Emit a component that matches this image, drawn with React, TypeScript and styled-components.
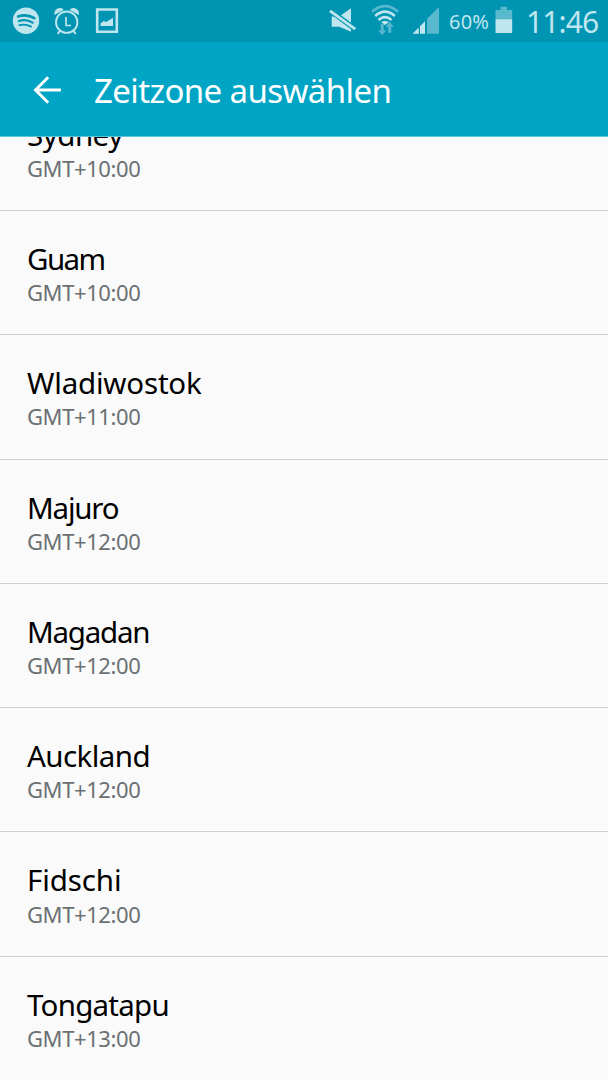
import React from 'react';
import styled, { createGlobalStyle } from 'styled-components';

const GlobalStyle = createGlobalStyle`
  * { box-sizing: border-box; }
  body { margin: 0; background: #fafafa; overflow: hidden; }
`;

const Screen = styled.main`
  display: flex;
  flex-direction: column;
  width: 608px;
  height: 1080px;
  overflow: hidden;
  background: #fafafa;
  font-family: 'Noto Sans', sans-serif;
`;

const StatusBar = styled.div`
  display: flex;
  flex: none;
  justify-content: space-between;
  height: 42px;
  background: #0094b3;
  color: #bfe6ee;
`;

const StatusIcons = styled.svg`
  display: block;
  flex: none;
  height: 42px;
`;

const StatusGroup = styled.div`
  display: flex;
  height: 42px;
`;

const Battery = styled.span`
  width: 46px;
  padding-left: 5px;
  font-size: 20px;
  line-height: 43px;
  letter-spacing: 0.2px;
  white-space: nowrap;
`;

const Clock = styled.time`
  width: 90px;
  padding-left: 8px;
  font-size: 30px;
  line-height: 43px;
  letter-spacing: -0.9px;
  white-space: nowrap;
`;

const AppBar = styled.header`
  display: flex;
  flex: none;
  align-items: center;
  height: 95px;
  padding-left: 33px;
  background: #00a5c6;
  border-bottom: 1px solid #5cc3d9;
  color: #fff;
`;

const BackIcon = styled.svg`
  display: block;
  flex: none;
  margin-top: 2px;
`;

const Title = styled.h1`
  margin: 4px 0 0 32px;
  font-size: 33px;
  font-weight: 400;
  line-height: 46px;
  letter-spacing: -0.6px;
  white-space: nowrap;
`;

const Viewport = styled.div`
  flex: 1;
  min-height: 0;
  overflow: hidden;
`;

const List = styled.ul`
  margin: -50.3px 0 0;
  padding: 0;
  list-style: none;
`;

const Row = styled.li`
  height: 124.3px;
  padding: 28px 0 0 27px;
  border-bottom: 1px solid #cfcfcf;
`;

const City = styled.div<{ $tracking: number }>`
  height: 39.2px;
  font-size: 29.5px;
  line-height: 40px;
  letter-spacing: ${(p) => p.$tracking}px;
  color: #000;
`;

const Offset = styled.div`
  height: 29px;
  font-size: 22px;
  line-height: 29px;
  letter-spacing: -0.4px;
  color: #6b7073;
`;

const zones = [
  { city: 'Sydney', offset: 'GMT+10:00', tracking: -0.5 },
  { city: 'Guam', offset: 'GMT+10:00', tracking: -1.6 },
  { city: 'Wladiwostok', offset: 'GMT+11:00', tracking: -0.2 },
  { city: 'Majuro', offset: 'GMT+12:00', tracking: -1.2 },
  { city: 'Magadan', offset: 'GMT+12:00', tracking: -1.25 },
  { city: 'Auckland', offset: 'GMT+12:00', tracking: -0.55 },
  { city: 'Fidschi', offset: 'GMT+12:00', tracking: -0.1 },
  { city: 'Tongatapu', offset: 'GMT+13:00', tracking: -0.75 },
];

const Notifications = () => (
  <StatusIcons width="120" viewBox="0 0 120 42" fill="none" stroke="#bfe6ee">
    <circle cx="26" cy="20.7" r="13.2" fill="#bfe6ee" stroke="none" />
    <g stroke="#0094b3" strokeLinecap="round">
      <path d="M18 16.400c5.500-1.600 11.800-1 16.400 1.700" strokeWidth="2.600" />
      <path d="M18.800 21c4.700-1.400 9.800-.8 13.800 1.600" strokeWidth="2.200" />
      <path d="M19.400 25.200c4-1.100 8.200-.6 11.600 1.400" strokeWidth="1.900" />
    </g>
    <circle cx="66.700" cy="22.200" r="10.700" strokeWidth="1.900" />
    <path d="M66 17v8.500h5" strokeWidth="1.700" />
    <path d="M59.800 31l-2 3M73.600 31l2 3" strokeWidth="2" />
    <path d="M54.500 15c-1.200-5.500 5.500-9.200 9.300-5.200zM78.900 15c1.200-5.500-5.500-9.200-9.300-5.200z" fill="#bfe6ee" stroke="none" />
    <path d="M97.200 9.500h19.600v22.300H97.200z" strokeWidth="2.600" />
    <path d="M100.500 26v-2.500l3.200-2.600 2.500 1 6.800-4.200V26z" fill="#bfe6ee" stroke="none" />
  </StatusIcons>
);

const Connectivity = () => (
  <StatusIcons width="116" viewBox="328 0 116 42" fill="#bfe6ee">
    <path d="M331.700 16.500h7.500l11.800-8.200v23.400l-11.800-5h-7.500z" />
    <path d="M330 10.300l25.300 18.900" stroke="#0094b3" strokeWidth="5.200" />
    <path d="M330 10.800l25.300 18.400" stroke="#bfe6ee" strokeWidth="2.900" />
    <g fill="none" stroke="#bfe6ee" strokeWidth="2.600">
      <path d="M372 11.700q13-11 26 0" stroke="#58b8cd" />
      <path d="M375.200 15.900q9.800-8.400 19.600 0" />
      <path d="M378.500 19.900q6.500-5.400 13 0" />
    </g>
    <path d="M381 22.100q4-2.400 8 0l-4 3z" />
    <path d="M380.700 24h3v6.500h2.600l-4.100 4.600-4.100-4.600h2.600zM388.200 32.800v-6h-2.700l4.200-4.800 4.200 4.800h-2.700v6z" fill="#58b8cd" />
    <path d="M412.500 33.800l6.300-6.300v6.300zM420 33.800v-7.600l5-5v12.600z" />
    <path d="M427 33.800V18.700L439 7v26.800z" fill="#58b8cd" />
  </StatusIcons>
);

const BatteryIcon = () => (
  <StatusIcons width="28" viewBox="490 0 28 42">
    <path d="M495.500 10h5V6.800h6.500V10h5.200v9.300h-16.700z" fill="#58b8cd" />
    <path d="M495.500 19.200h16.700V33h-16.700z" fill="#bfe6ee" />
  </StatusIcons>
);

const BackArrow = () => (
  <BackIcon width="29" height="30" viewBox="33.500 75 29 30" fill="none" stroke="#fff" strokeWidth="2.900">
    <path d="M61.400 90H36M48.700 77.300L36 90l12.700 12.700" />
  </BackIcon>
);

export default function App() {
  return (
    <>
      <GlobalStyle />
      <Screen>
        <StatusBar>
          <Notifications />
          <StatusGroup>
            <Connectivity />
            <Battery>60%</Battery>
            <BatteryIcon />
            <Clock>11:46</Clock>
          </StatusGroup>
        </StatusBar>
        <AppBar>
          <BackArrow />
          <Title>Zeitzone auswählen</Title>
        </AppBar>
        <Viewport>
          <List>
            {zones.map((zone) => (
              <Row key={zone.city}>
                <City $tracking={zone.tracking}>{zone.city}</City>
                <Offset>{zone.offset}</Offset>
              </Row>
            ))}
          </List>
        </Viewport>
      </Screen>
    </>
  );
}
